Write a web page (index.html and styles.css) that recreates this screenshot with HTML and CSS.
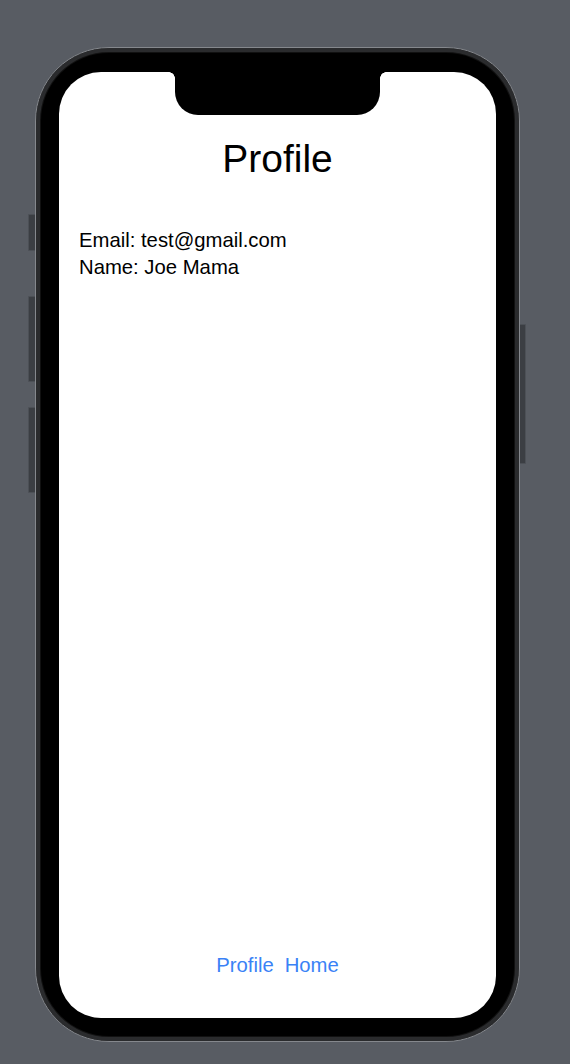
FILE: index.html
```html
<!DOCTYPE html>
<html lang="en">
<head>
<meta charset="utf-8">
<title>Profile</title>
<link rel="stylesheet" href="styles.css">
</head>
<body>
<div class="device">
  <span class="btn btn-mute"></span>
  <span class="btn btn-vol-up"></span>
  <span class="btn btn-vol-down"></span>
  <span class="btn btn-power"></span>
  <div class="bezel">
    <div class="screen">
      <div class="notch"></div>
      <h1 class="title">Profile</h1>
      <div class="info">
        <p class="line">Email: test@gmail.com</p>
        <p class="line">Name: Joe Mama</p>
      </div>
      <div class="spacer"></div>
      <nav class="tabs">
        <a class="tab">Profile</a>
        <a class="tab">Home</a>
      </nav>
    </div>
  </div>
</div>
</body>
</html>
```
FILE: styles.css
```css
html, body {
  margin: 0;
  padding: 0;
}
body {
  background: #585c63;
  width: 570px;
  height: 1064px;
  overflow: hidden;
  font-family: "Liberation Sans", Arial, sans-serif;
}
.device {
  position: relative;
  margin: 47px 0 0 35px;
  width: 485px;
  height: 995px;
}
.btn {
  position: absolute;
  background: #3b3e43;
  border: 1px solid #4c5056;
  box-sizing: border-box;
  border-radius: 1px;
}
.btn-mute { left: -7px; top: 167px; width: 8px; height: 37px; }
.btn-vol-up { left: -7px; top: 249px; width: 8px; height: 86px; }
.btn-vol-down { left: -7px; top: 360px; width: 8px; height: 86px; }
.btn-power { right: -6px; top: 277px; width: 7px; height: 140px; }
.bezel {
  position: relative;
  box-sizing: border-box;
  width: 100%;
  height: 100%;
  padding: 24px 23px 23px 23px;
  background: #000;
  border: 1px solid #85888d;
  border-radius: 74px;
  box-shadow: inset 0 0 0 4px #2a2b2d, inset 0 0 0 5px #111;
}
.screen {
  position: relative;
  display: flex;
  flex-direction: column;
  height: 100%;
  background: #fff;
  border-radius: 42px;
  overflow: hidden;
}
.notch {
  position: absolute;
  top: 0;
  left: 116px;
  width: 205px;
  height: 43px;
  background: #000;
  border-radius: 0 0 23px 23px;
}
.notch::before,
.notch::after {
  content: "";
  position: absolute;
  top: 0;
  width: 6px;
  height: 6px;
}
.notch::before {
  left: -6px;
  background: radial-gradient(circle at 0 100%, transparent 5.5px, #000 6px);
}
.notch::after {
  right: -6px;
  background: radial-gradient(circle at 100% 100%, transparent 5.5px, #000 6px);
}
.title {
  margin: 63px 0 0 0;
  font-size: 39px;
  line-height: 47px;
  font-weight: 400;
  text-align: center;
  color: #000;
}
.info {
  margin-top: 45px;
  padding-left: 20px;
}
.line {
  margin: 0;
  font-size: 20.3px;
  line-height: 26.5px;
  color: #000;
}
.spacer {
  flex: 1;
}
.tabs {
  display: flex;
  justify-content: center;
  gap: 11px;
  padding-bottom: 40px;
}
.tab {
  font-size: 20.3px;
  line-height: 26px;
  color: #3a82f6;
}
```
